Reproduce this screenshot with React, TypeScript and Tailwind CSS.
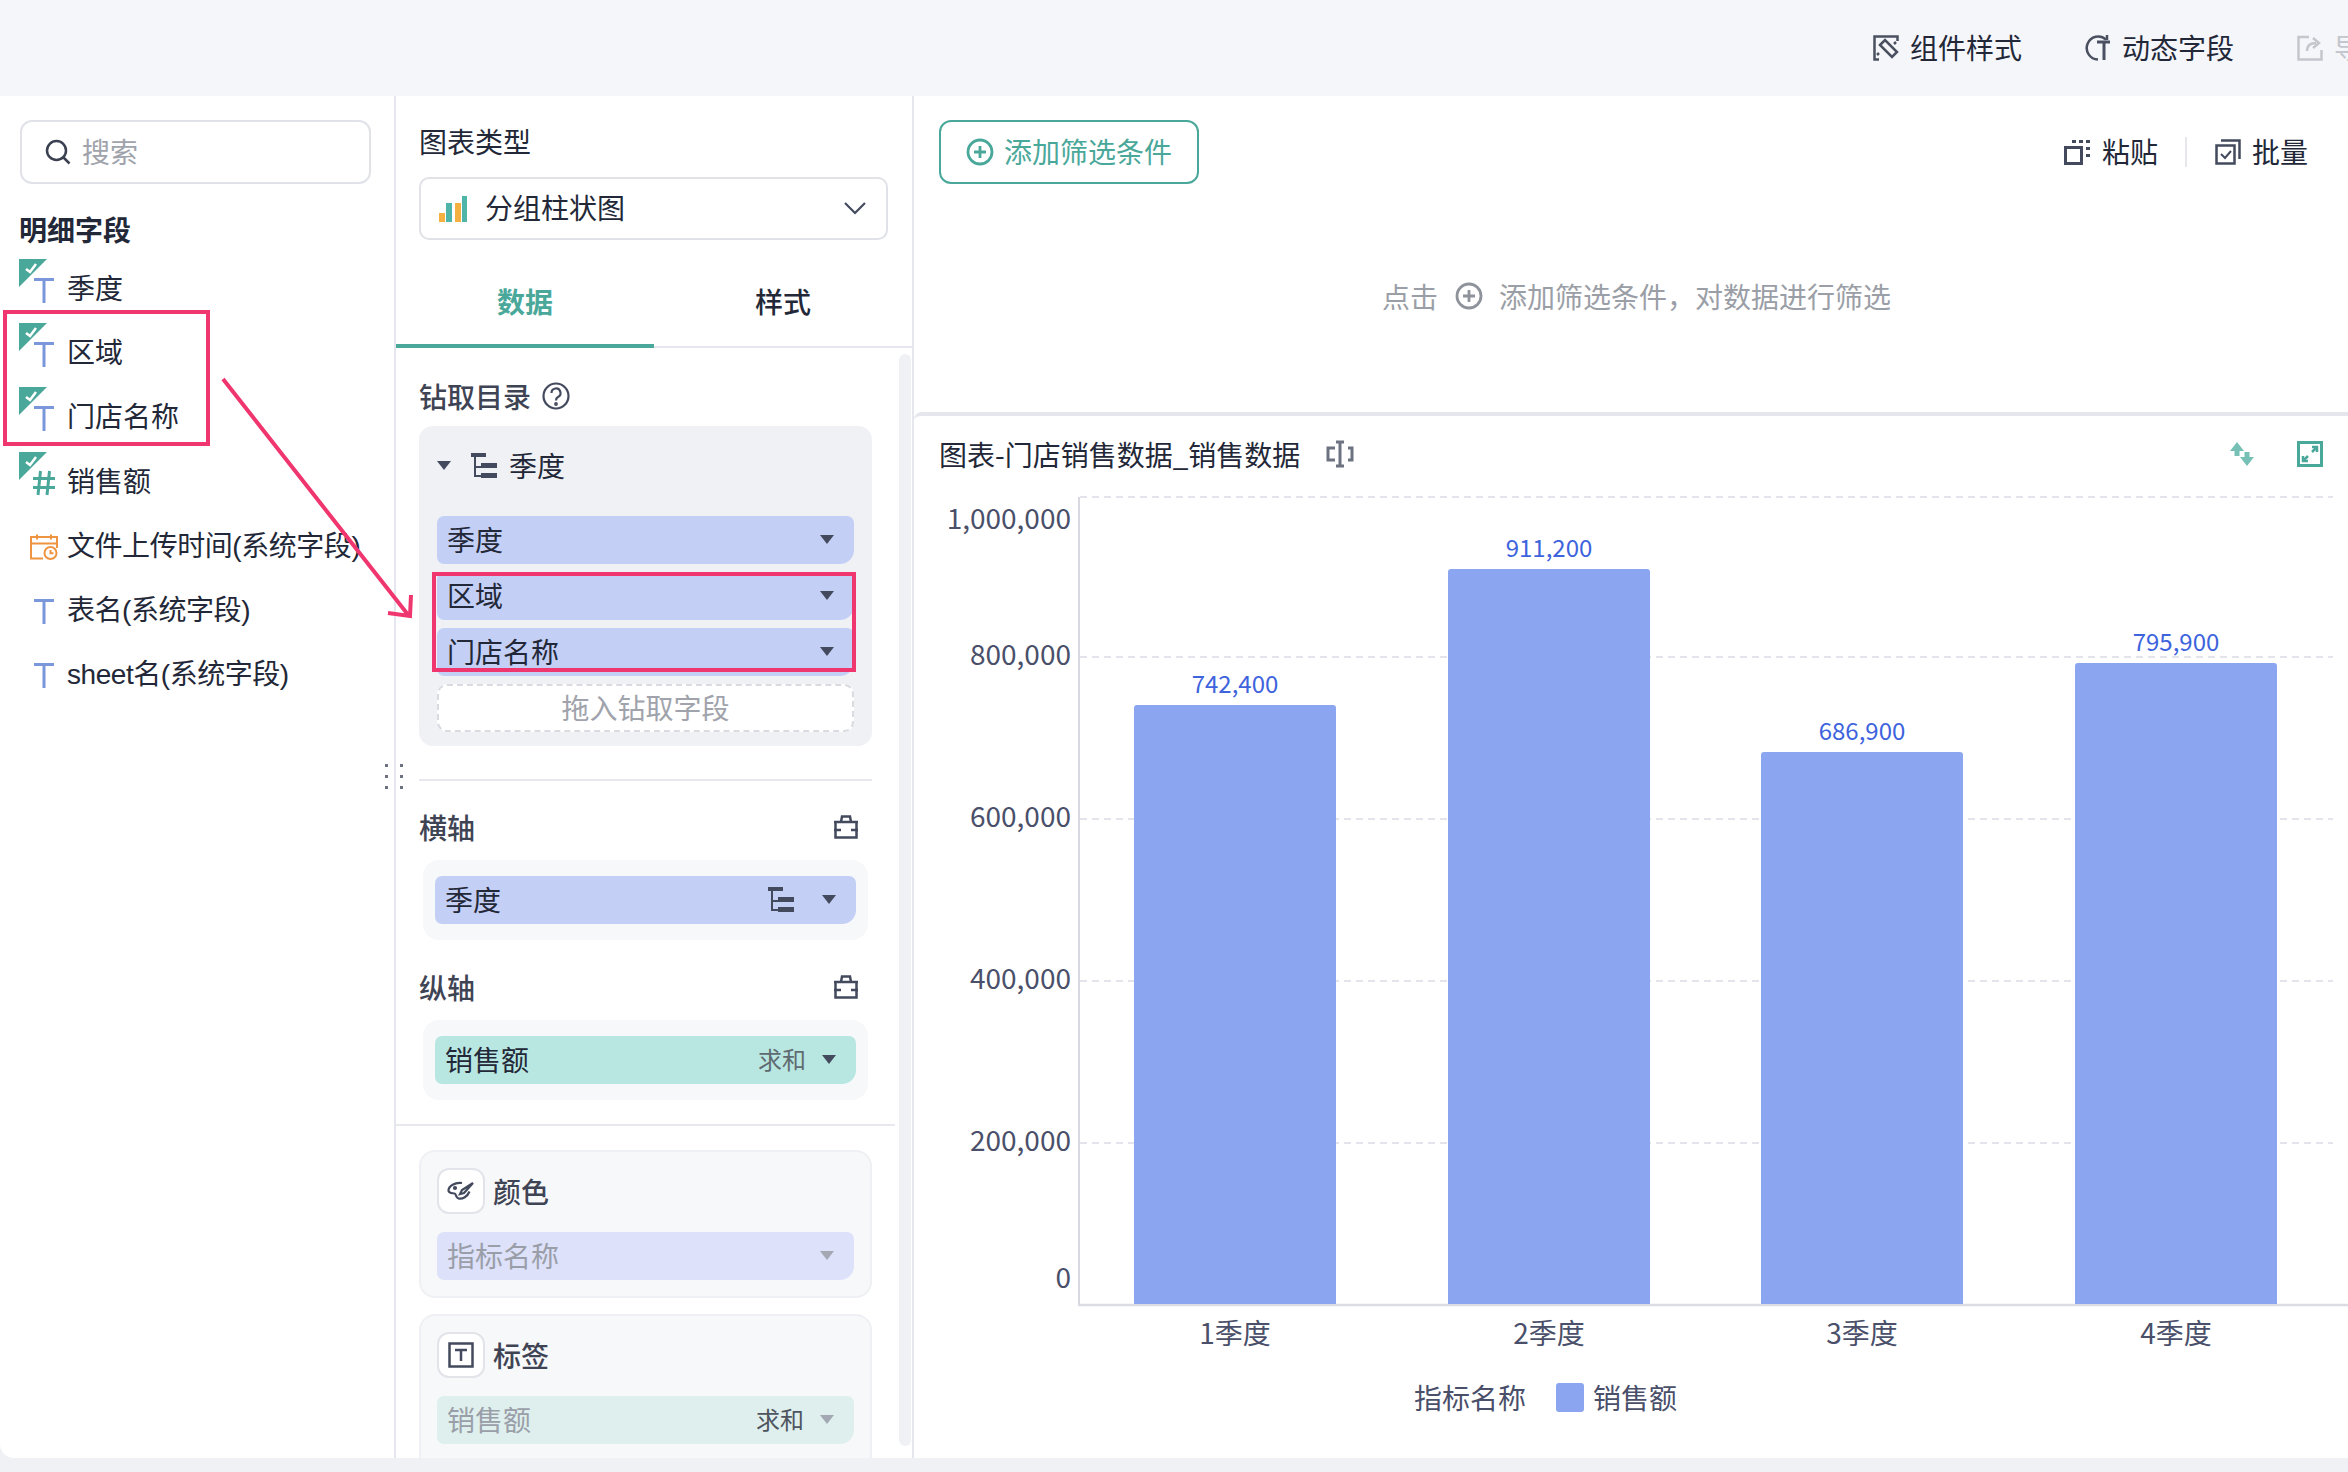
import React from "react"

const fields = [
  { name: "季度", icon: "text", flag: true },
  { name: "区域", icon: "text", flag: true },
  { name: "门店名称", icon: "text", flag: true },
  { name: "销售额", icon: "num", flag: true },
  { name: "文件上传时间(系统字段)", icon: "date", flag: false },
  { name: "表名(系统字段)", icon: "text", flag: false },
  { name: "sheet名(系统字段)", icon: "text", flag: false },
]

const bars = [
  { label: "1季度", value: "742,400", x: 1134, top: 705 },
  { label: "2季度", value: "911,200", x: 1448, top: 569 },
  { label: "3季度", value: "686,900", x: 1761, top: 752 },
  { label: "4季度", value: "795,900", x: 2075, top: 663 },
]

const ticks = [
  { label: "1,000,000", grid: 497, text: 520 },
  { label: "800,000", grid: 657, text: 656 },
  { label: "600,000", grid: 819, text: 818 },
  { label: "400,000", grid: 981, text: 980 },
  { label: "200,000", grid: 1143, text: 1142 },
  { label: "0", grid: 0, text: 1279 },
]

function Caret({ muted }: { muted?: boolean }) {
  return (
    <svg width="14" height="9" viewBox="0 0 14 9" className="shrink-0">
      <path d="M0 0h14L7 9z" fill={muted ? "#a3a8b3" : "#434a5e"} />
    </svg>
  )
}

function TreeIcon() {
  return (
    <svg width="26" height="25" viewBox="0 0 26 25" fill="#434a5e" className="shrink-0">
      <rect x="0" y="0" width="15" height="4" />
      <rect x="3" y="4" width="2" height="20" />
      <rect x="3" y="13" width="7" height="2" />
      <rect x="3" y="22" width="7" height="2" />
      <rect x="10" y="10" width="16" height="5" />
      <rect x="10" y="20" width="16" height="5" />
    </svg>
  )
}

function PotIcon() {
  return (
    <svg width="26" height="24" viewBox="0 0 26 24" fill="none" stroke="#434a5e" strokeWidth="2.5" className="shrink-0">
      <path d="M8 7l1-5.500h8L18 7M1 7h24M2.500 7v15.500h21V7M1 15h7M18 15h7" />
    </svg>
  )
}

function Pill({
  text,
  color,
  muted,
  right,
  className,
}: {
  text: string
  color: string
  muted?: boolean
  right?: React.ReactNode
  className?: string
}) {
  return (
    <div className={`flex h-[48px] items-center rounded-[7px] rounded-br-[14px] pb-[2px] pl-[10px] pr-[20px] ${color} ${className ?? ""}`}>
      <span className={muted ? "text-[#9a9ea8]" : "text-[#232838]"}>{text}</span>
      <div className="flex-1" />
      {right}
      <Caret muted={muted} />
    </div>
  )
}

function FieldIcon({ kind }: { kind: string }) {
  if (kind === "num") {
    return (
      <svg width="24" height="26" viewBox="0 0 24 26" stroke="#4aa89a" strokeWidth="3" fill="none">
        <path d="M8.500 1L6 25M17.500 1L15 25M1 8.500h22M1 17.500h22" />
      </svg>
    )
  }
  if (kind === "date") {
    return (
      <svg width="28" height="26" viewBox="0 0 28 26" stroke="#ef9440" strokeWidth="2" fill="none">
        <path d="M13 24.500H1V3h26v11M1 9.500h26M7 .5v5M21 .5v5" />
        <circle cx="20.500" cy="19" r="6" />
        <path d="M20.500 16v3.200h3" />
      </svg>
    )
  }
  return (
    <svg width="20" height="25" viewBox="0 0 20 25" fill="#7b97dc">
      <rect x="0" y="0" width="20" height="3" />
      <rect x="8.500" y="0" width="3" height="25" />
    </svg>
  )
}

export default function App() {
  return (
    <div className="relative flex h-[1472px] w-[2348px] flex-col overflow-hidden bg-[#f0f1f5] font-['Noto_Sans_CJK_SC','Noto_Sans',sans-serif] text-[28px] leading-[40px] text-[#232838]">
      {/* Top bar */}
      <header className="flex h-[96px] shrink-0 items-center bg-[#f5f6fa] pl-[1873px] whitespace-nowrap">
        <svg width="26" height="26" viewBox="0 0 26 26" fill="none" stroke="#4a5060" strokeWidth="2.500" className="shrink-0">
          <path d="M6 24.500H1.500v-23h23V6" />
          <path d="M7 10l5-5 12 12-5 5z" />
          <path d="M4 20l2-2M21 9l2-2" />
        </svg>
        <span className="mb-[2px] ml-[11px]">组件样式</span>
        <svg width="26" height="26" viewBox="0 0 26 26" fill="none" stroke="#4a5060" strokeWidth="2.500" className="ml-[63px] shrink-0">
          <path d="M13 24.500A11.500 11.500 0 1 1 21 4.500" />
          <path d="M12 7h13M19 7v18" strokeWidth="3" />
          <path d="M22 0v5" />
        </svg>
        <span className="mb-[2px] ml-[11px]">动态字段</span>
        <svg width="26" height="26" viewBox="0 0 26 26" fill="none" stroke="#c3c6cc" strokeWidth="2.500" className="ml-[63px] shrink-0">
          <path d="M12 2H1.500v22.500h23V15" />
          <path d="M10 16c0-5 3-8 9-8M16 3l6 5-6 5" />
        </svg>
        <span className="mb-[2px] ml-[11px] text-[#c3c6cc]">导出</span>
      </header>

      <main className="flex h-[1362px] shrink-0 overflow-hidden rounded-bl-[14px] bg-white">
        {/* Field list */}
        <aside className="w-[396px] shrink-0 border-r-2 border-[#e6e7ee] px-[20px] pt-[24px] whitespace-nowrap">
          <div className="flex h-[64px] w-[351px] items-center rounded-[12px] border-2 border-[#e0e2e8] pl-[23px]">
            <svg width="26" height="26" viewBox="0 0 26 26" fill="none" stroke="#3a4050" strokeWidth="2.500">
              <circle cx="11.500" cy="11.500" r="9.500" />
              <path d="M18.500 18.500l6 6" />
            </svg>
            <span className="mb-[2px] ml-[11px] text-[#a0a3ab]">搜索</span>
          </div>
          <div className="-ml-px mt-[25px] font-bold">明细字段</div>
          <div className="mt-[9px] font-['Liberation_Sans','Noto_Sans_CJK_SC',sans-serif]">
            {fields.map((f) => (
              <div key={f.name} className="relative flex h-[64.200px] items-center">
                {f.flag && (
                  <svg width="28" height="28" viewBox="0 0 28 28" className="absolute left-[-1px] top-[1px]">
                    <path d="M0 0h28L0 28z" fill="#4aa89a" />
                    <path d="M7 10l4 3 6-8" fill="none" stroke="#fff" strokeWidth="2.500" />
                  </svg>
                )}
                <div className="flex w-[47px] justify-center">
                  <FieldIcon kind={f.icon} />
                </div>
                <span className={f.flag ? "" : "tracking-[-0.45px]"}>{f.name}</span>
              </div>
            ))}
          </div>
        </aside>

        {/* Config panel */}
        <section className="flex w-[518px] shrink-0 flex-col overflow-hidden border-r-2 border-[#e6e7ee]">
          <div className="px-[23px] pt-[25px]">
            <div>图表类型</div>
            <div className="mt-[16px] flex h-[63px] w-[469px] items-center rounded-[10px] border-2 border-[#e0e2e8] pl-[18px] pr-[20px]">
              <svg width="28" height="26" viewBox="0 0 28 26" className="shrink-0">
                <rect x="0" y="17" width="6" height="9" fill="#f5b042" />
                <rect x="7" y="7" width="6" height="19" fill="#4fb5a8" />
                <rect x="16" y="7" width="6" height="19" fill="#f5b042" />
                <rect x="23" y="0" width="5" height="26" fill="#4fb5a8" />
              </svg>
              <span className="mb-[3px] ml-[18px]">分组柱状图</span>
              <div className="flex-1" />
              <svg width="22" height="13" viewBox="0 0 22 13" fill="none" stroke="#434a5e" strokeWidth="2.200">
                <path d="M1 1l10 10L21 1" />
              </svg>
            </div>
          </div>
          <div className="mt-[22px] grid h-[86px] shrink-0 grid-cols-2 border-b-2 border-[#e6e7ee] text-center leading-[78px]">
            <div className="-mb-[2px] border-b-4 border-[#4aa89a] font-bold text-[#4aa89a]">数据</div>
            <div className="font-medium">样式</div>
          </div>

          <div className="flex flex-1 overflow-hidden">
            <div className="w-[499px] shrink-0">
              <div className="px-[23px]">
                <div className="mt-[28px] flex items-center font-medium text-[#3f4454]">
                  钻取目录
                  <svg width="28" height="28" viewBox="0 0 28 28" fill="none" stroke="#434a5e" strokeWidth="2.200" className="ml-[11px]">
                    <circle cx="14" cy="14" r="12.500" />
                    <path d="M9.500 11a4.500 4.500 0 1 1 6.500 4c-1.500.8-2 1.500-2 3.500" />
                    <circle cx="14" cy="22" r=".8" />
                  </svg>
                </div>
                <div className="mt-[10px] rounded-[14px] bg-[#f0f1f5] px-[18px] pb-[14px] pt-[20px]">
                  <div className="flex h-[40px] items-center pb-[2px]">
                    <Caret />
                    <span className="ml-[20px]"><TreeIcon /></span>
                    <span className="ml-[12px]">季度</span>
                  </div>
                  <div className="mt-[30px] flex flex-col gap-[8px]">
                    <Pill text="季度" color="bg-[#c4cff6]" />
                    <Pill text="区域" color="bg-[#c4cff6]" />
                    <Pill text="门店名称" color="bg-[#c4cff6]" />
                    <div className="flex h-[48px] items-center justify-center rounded-[10px] border-2 border-dashed border-[#d9dbe1] bg-white pb-[2px] text-[#a0a3ab]">
                      拖入钻取字段
                    </div>
                  </div>
                </div>
                <div className="mt-[33px] h-[2px] bg-[#e8e9ee]" />
                <div className="mt-[26px] flex items-center justify-between pr-[13px] font-medium text-[#3f4454]">
                  横轴
                  <PotIcon />
                </div>
                <div className="mx-[4px] mt-[13px] rounded-[16px] bg-[#f7f8fa] px-[12px] py-[16px]">
                  <Pill
                    text="季度"
                    color="bg-[#c4cff6]"
                    right={<span className="mr-[28px]"><TreeIcon /></span>}
                  />
                </div>
                <div className="mt-[27px] flex items-center justify-between pr-[13px] font-medium text-[#3f4454]">
                  纵轴
                  <PotIcon />
                </div>
                <div className="mx-[4px] mt-[13px] rounded-[16px] bg-[#f7f8fa] px-[12px] py-[16px]">
                  <Pill
                    text="销售额"
                    color="bg-[#b8e6e0]"
                    right={<span className="mr-[16px] text-[24px] text-[#5f6b70]">求和</span>}
                  />
                </div>
              </div>
              <div className="mt-[24px] h-[2px] bg-[#e8e9ee]" />
              <div className="px-[23px]">
                <div className="mt-[24px] h-[148px] rounded-[16px] border-2 border-[#eff0f4] bg-[#f7f8fa] px-[16px] pt-[16px]">
                  <div className="flex items-center">
                    <div className="flex h-[46px] w-[48px] items-center justify-center rounded-[12px] border-2 border-[#e2e4ea] bg-white">
                      <svg width="28" height="22" viewBox="0 0 28 22" fill="none" stroke="#434a5e" strokeWidth="2.200">
                        <path d="M15 3C8 2 1.500 6 1.500 10.500c0 3 4 2.500 6 3 2 .5 1 4 4 5 4 1 9-2 11-7" />
                        <path d="M26 3L15 10l-2 4 4-1z" />
                        <circle cx="8" cy="8" r="1" />
                      </svg>
                    </div>
                    <span className="ml-[8px] font-medium text-[#3f4454]">颜色</span>
                  </div>
                  <Pill text="指标名称" color="bg-[#dde1fa]" muted className="mt-[18px]" />
                </div>
                <div className="mt-[16px] h-[160px] rounded-[16px] border-2 border-[#eff0f4] bg-[#f7f8fa] px-[16px] pt-[16px]">
                  <div className="flex items-center">
                    <div className="flex h-[46px] w-[48px] items-center justify-center rounded-[12px] border-2 border-[#e2e4ea] bg-white">
                      <svg width="26" height="26" viewBox="0 0 26 26" fill="none" stroke="#434a5e" strokeWidth="2.500">
                        <rect x="1.500" y="1.500" width="23" height="23" />
                        <path d="M7 8h12M13 8v11" />
                      </svg>
                    </div>
                    <span className="ml-[8px] font-medium text-[#3f4454]">标签</span>
                  </div>
                  <Pill
                    text="销售额"
                    color="bg-[#deefed]"
                    muted
                    right={<span className="mr-[16px] text-[24px] text-[#4f5560]">求和</span>}
                    className="mt-[18px]"
                  />
                </div>
              </div>
            </div>
            <div className="ml-[4px] mt-[6px] h-[1092px] w-[12px] rounded-[6px] bg-[#f0f1f5]" />
          </div>
        </section>

        {/* Filter + chart */}
        <section className="flex min-w-0 flex-1 flex-col whitespace-nowrap">
          <div className="h-[316px] shrink-0 px-[25px] pt-[24px]">
            <div className="flex items-center">
              <div className="flex h-[64px] w-[260px] items-center justify-center gap-[10px] rounded-[12px] border-2 border-[#4aa89a] text-[#4aa89a]">
                <svg width="28" height="28" viewBox="0 0 28 28" fill="none" stroke="#4aa89a" strokeWidth="2.800">
                  <circle cx="14" cy="14" r="12" />
                  <path d="M14 8v12M8 14h12" />
                </svg>
                <span className="mb-[2px]">添加筛选条件</span>
              </div>
              <div className="flex-1" />
              <svg width="26" height="26" viewBox="0 0 26 26" className="shrink-0">
                <rect x="1.500" y="8.500" width="16" height="16" fill="none" stroke="#434a5e" strokeWidth="3" />
                <path d="M8 1h4v3H8zM15 1h4v3h-4zM22 1h4v3h-4zM22 8h4v3h-4zM22 15h4v3h-4z" fill="#434a5e" />
              </svg>
              <span className="mb-[2px] ml-[12px]">粘贴</span>
              <div className="ml-[27px] h-[30px] w-[2px] bg-[#e6e7ee]" />
              <svg width="26" height="26" viewBox="0 0 26 26" fill="none" stroke="#434a5e" strokeWidth="2.500" className="ml-[28px] shrink-0">
                <rect x="1.500" y="6.500" width="18" height="18" />
                <path d="M6 1.500h18.500V20" />
                <path d="M6 15l4 4 6-7" strokeWidth="2" />
              </svg>
              <span className="mb-[2px] ml-[11px] mr-[15px]">批量</span>
            </div>
            <div className="mt-[92px] flex items-center pl-[443px] text-[#9a9ea6]">
              点击
              <svg width="28" height="28" viewBox="0 0 28 28" fill="none" stroke="#8e929b" strokeWidth="2.800" className="ml-[17px]">
                <circle cx="14" cy="14" r="12" />
                <path d="M14 8v12M8 14h12" />
              </svg>
              <span className="ml-[16px]">添加筛选条件，对数据进行筛选</span>
            </div>
          </div>

          <div className="flex-1 rounded-tl-[8px] border-t-4 border-[#e6e7ee]">
            <div className="flex items-center pl-[25px] pt-[18px]">
              图表-门店销售数据_销售数据
              <svg width="28" height="28" viewBox="0 0 28 28" fill="none" stroke="#6c7280" strokeWidth="3" className="ml-[26px]">
                <path d="M9 8H2v12h7M22 8h4v12h-4M10 2h8M10 26h8M14 2v24" />
              </svg>
              <div className="flex-1" />
              <svg width="24" height="24" viewBox="0 0 24 24" fill="#77c0b6" className="mr-[43px] shrink-0">
                <path d="M7 0l7 9H9.500v5h-5V9H0zM17 24l-7-9h4.500v-5h5v5H24z" />
              </svg>
              <svg width="26" height="26" viewBox="0 0 26 26" fill="none" stroke="#4aa89a" className="mr-[25px] shrink-0">
                <rect x="1.500" y="1.500" width="23" height="23" strokeWidth="3" />
                <path d="M15 11l5-5M6 20l5-5" strokeWidth="2.500" />
                <path d="M15 6h5v5M6 15v5h5" strokeWidth="2.500" />
              </svg>
            </div>

            {/* Coordinates in the viewBox are page coordinates */}
            <svg width="1434" height="870" viewBox="914 490 1434 870" className="mt-[16px] block">
              {ticks.map((t) =>
                t.grid ? (
                  <line key={t.grid} x1="1080" x2="2333" y1={t.grid} y2={t.grid} stroke="#dcdde6" strokeWidth="1.500" strokeDasharray="7 5" />
                ) : null
              )}
              <line x1="1079" x2="1079" y1="497" y2="1304" stroke="#d8d9e2" strokeWidth="2" />
              <line x1="1078" x2="2348" y1="1305" y2="1305" stroke="#dcdde4" strokeWidth="2.500" />
              {bars.map((b) => (
                <g key={b.label}>
                  <path
                    d={`M${b.x} 1304V${b.top + 3}q0-3 3-3h196q3 0 3 3V1304z`}
                    fill="#8ba5f0"
                  />
                  <text x={b.x + 101} y={b.top - 12} textAnchor="middle" fontSize="24" fill="#3d63dd">
                    {b.value}
                  </text>
                  <text x={b.x + 101} y="1344" textAnchor="middle" fontSize="28" fill="#4a4f6a">
                    {b.label}
                  </text>
                </g>
              ))}
              {ticks.map((t) => (
                <text key={t.label} x="1071" y={t.text + 9} textAnchor="end" fontSize="28" fill="#4a4f6a">
                  {t.label}
                </text>
              ))}
            </svg>

            <div className="mt-[17px] flex items-center pl-[500px] text-[#4a4f6a]">
              指标名称
              <div className="ml-[30px] h-[29px] w-[28px] rounded-[3px] bg-[#8ba5f0]" />
              <span className="ml-[9px]">销售额</span>
            </div>
          </div>
        </section>
      </main>
      <div className="flex-1" />

      {/* Annotations drawn over the page */}
      <div className="absolute left-[3px] top-[310px] h-[136px] w-[207px] border-4 border-[#f0366f]" />
      <div className="absolute left-[432px] top-[572px] h-[100px] w-[424px] border-4 border-[#f0366f]" />
      <svg width="200" height="250" viewBox="220 375 200 250" className="absolute left-[220px] top-[375px]" fill="none" stroke="#f0366f" strokeWidth="4">
        <path d="M223 379L409 616M388 613l22 3 1-21" />
      </svg>
      <div className="absolute left-[385px] top-[764px] grid grid-cols-2 gap-x-[12px] gap-y-[8px]">
        {[0, 1, 2, 3, 4, 5].map((i) => (
          <div key={i} className="h-[3px] w-[3px] bg-[#6c7280]" />
        ))}
      </div>
    </div>
  )
}
